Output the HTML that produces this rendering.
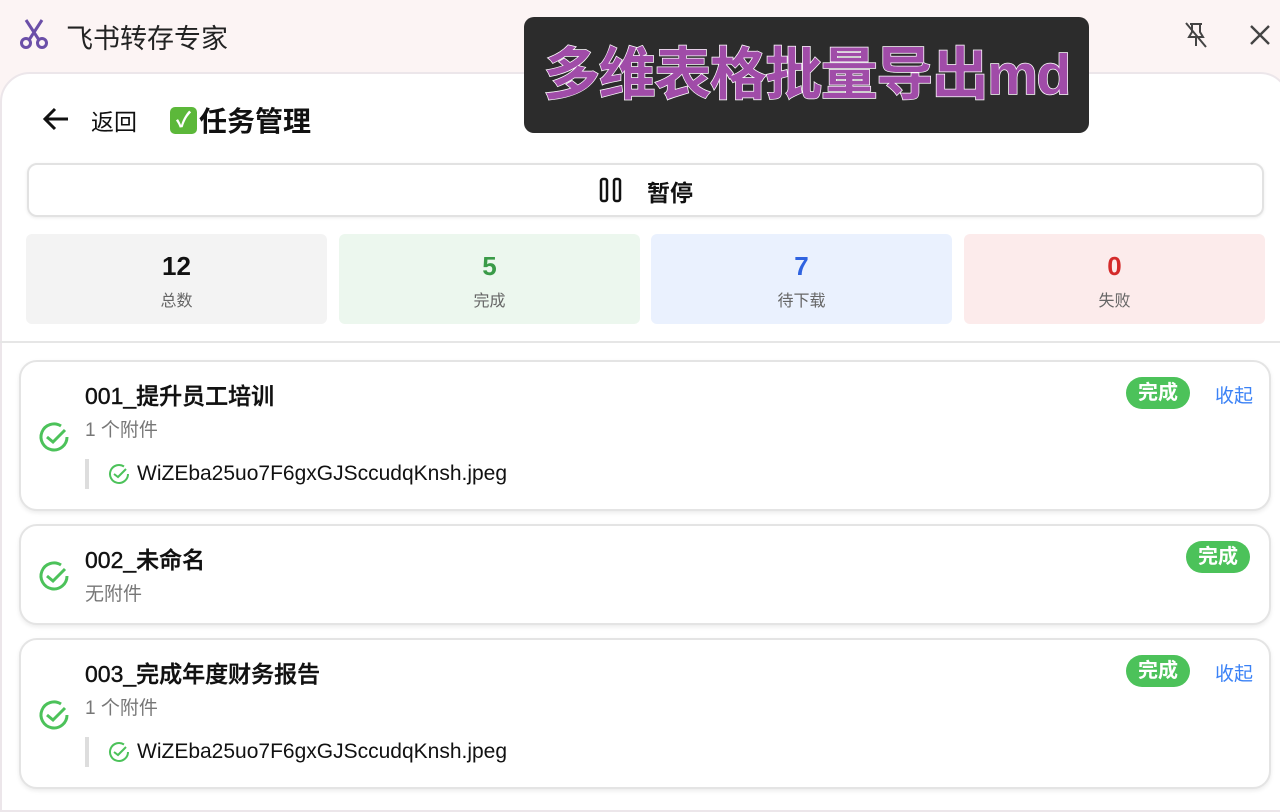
<!DOCTYPE html>
<html><head><meta charset="utf-8"><style>
*{box-sizing:border-box;margin:0;padding:0}
body{width:1280px;height:800px;overflow:hidden;background:#fcf4f4;font-family:"Liberation Sans","Noto Sans CJK SC",sans-serif;color:#111;position:relative}
.title{position:absolute;left:66px;top:17px;font-size:27px;color:#222}
.panel{position:absolute;left:0;top:72px;width:1290px;height:740px;background:#fff;border:2px solid #ece6ea;border-radius:30px 30px 0 0}
.abs{position:absolute}
.stat{position:absolute;top:234px;width:301px;height:90px;border-radius:6px;text-align:center}
.stat b{display:block;font-size:26px;margin-top:17px;line-height:30px}
.stat span{display:block;font-size:16px;color:#666;margin-top:6px}
.card{position:absolute;left:19px;width:1252px;background:#fff;border:2px solid #e4e4e4;border-radius:18px;box-shadow:0 2px 4px rgba(0,0,0,.08)}
.name{position:absolute;left:64px;font-size:23px;font-weight:500;color:#111;-webkit-text-stroke:0.4px #111}
.sub{position:absolute;left:64px;font-size:19px;color:#777}
.badge{position:absolute;background:#4cc25a;color:#fff;font-weight:bold;font-size:20px;border-radius:16px;padding:2px 12px;line-height:28px}
.fold{position:absolute;color:#3b82f6;font-size:19px}
.att{position:absolute;left:64px;border-left:4px solid #ddd;height:30px;padding-left:18px;font-size:21px;line-height:30px;display:flex;align-items:center;gap:6px}
</style></head><body>
<svg class="abs" style="left:19px;top:18px" width="30" height="32" viewBox="0 0 30 32" fill="none" stroke="#6b4fa8" stroke-width="3"><path d="M7 2 L20 22 M23 2 L10 22"/><circle cx="7" cy="25" r="4.5"/><circle cx="23" cy="25" r="4.5"/></svg>
<div class="title">飞书转存专家</div>
<svg class="abs" style="left:1183px;top:21px" width="26" height="28" viewBox="0 0 26 28" fill="none" stroke="#444" stroke-width="2"><path d="M7 3h12M9 3v8l-3 5h14l-3-5V3M13 16v9M3 2l20 24"/></svg>
<svg class="abs" style="left:1249px;top:24px" width="22" height="22" viewBox="0 0 22 22" stroke="#444" stroke-width="2.4"><path d="M2 2l18 18M20 2L2 20"/></svg>
<div class="panel"></div>
<svg class="abs" style="left:42px;top:106px" width="28" height="26" viewBox="0 0 28 26" fill="none" stroke="#111" stroke-width="3"><path d="M26 13H4M13 3L3 13l10 10"/></svg>
<div class="abs" style="left:91px;top:103px;font-size:23px">返回</div>
<div class="abs" style="left:170px;top:100px;font-size:28px;font-weight:bold;display:flex;align-items:center"><span style="display:inline-block;width:27px;height:27px;background:#5cb83a;border-radius:5px;color:#fff;font-size:21px;text-align:center;line-height:27px;margin-right:2px">✓</span>任务管理</div>
<div class="abs" style="left:27px;top:163px;width:1237px;height:54px;border:2px solid #e2e2e2;border-radius:10px;box-shadow:0 1px 3px rgba(0,0,0,.08)"></div>
<svg class="abs" style="left:599px;top:177px" width="24" height="26" viewBox="0 0 24 26" fill="none" stroke="#111" stroke-width="2.5"><rect x="2" y="2" width="6" height="22" rx="2"/><rect x="15" y="2" width="6" height="22" rx="2"/></svg>
<div class="abs" style="left:647px;top:174px;font-size:23px;font-weight:bold">暂停</div>
<div class="stat" style="left:26px;background:#f3f3f3"><b style="color:#111">12</b><span>总数</span></div>
<div class="stat" style="left:339px;background:#ecf7ee"><b style="color:#3a9b48">5</b><span>完成</span></div>
<div class="stat" style="left:651px;background:#eaf1fe"><b style="color:#2f63e0">7</b><span>待下载</span></div>
<div class="stat" style="left:964px;background:#fcebeb"><b style="color:#d42a2a">0</b><span>失败</span></div>
<div class="abs" style="left:0;top:341px;width:1280px;height:2px;background:#e6e6e6"></div>

<div class="card" style="top:360px;height:151px">
<svg class="abs" style="left:16px;top:58px" width="34" height="34" viewBox="0 0 34 34" fill="none" stroke="#4cc25a" stroke-width="3"><path d="M30 17A13 13 0 1 1 24 6"/><path d="M10 17l6 5 12-12"/></svg>
<div class="name" style="top:15px">001_提升员工培训</div>
<div class="sub" style="top:53px">1 个附件</div>
<div class="att" style="top:97px"><svg width="24" height="24" viewBox="0 0 24 24" fill="none" stroke="#4cc25a" stroke-width="2"><path d="M21 12A9 9 0 1 1 17 4.5"/><path d="M7 12l4 3 8-8"/></svg>WiZEba25uo7F6gxGJSccudqKnsh.jpeg</div>
<div class="badge" style="left:1105px;top:15px">完成</div>
<div class="fold" style="left:1194px;top:19px">收起</div>
</div>

<div class="card" style="top:524px;height:101px">
<svg class="abs" style="left:16px;top:33px" width="34" height="34" viewBox="0 0 34 34" fill="none" stroke="#4cc25a" stroke-width="3"><path d="M30 17A13 13 0 1 1 24 6"/><path d="M10 17l6 5 12-12"/></svg>
<div class="name" style="top:15px">002_未命名</div>
<div class="sub" style="top:53px">无附件</div>
<div class="badge" style="left:1165px;top:15px">完成</div>
</div>

<div class="card" style="top:638px;height:151px">
<svg class="abs" style="left:16px;top:58px" width="34" height="34" viewBox="0 0 34 34" fill="none" stroke="#4cc25a" stroke-width="3"><path d="M30 17A13 13 0 1 1 24 6"/><path d="M10 17l6 5 12-12"/></svg>
<div class="name" style="top:15px">003_完成年度财务报告</div>
<div class="sub" style="top:53px">1 个附件</div>
<div class="att" style="top:97px"><svg width="24" height="24" viewBox="0 0 24 24" fill="none" stroke="#4cc25a" stroke-width="2"><path d="M21 12A9 9 0 1 1 17 4.5"/><path d="M7 12l4 3 8-8"/></svg>WiZEba25uo7F6gxGJSccudqKnsh.jpeg</div>
<div class="badge" style="left:1105px;top:15px">完成</div>
<div class="fold" style="left:1194px;top:19px">收起</div>
</div>

<div class="abs" style="left:524px;top:17px;width:565px;height:116px;background:#2c2c2c;border-radius:10px;text-align:center">
<div style="font-size:57px;font-weight:bold;color:#a04ca8;line-height:116px;letter-spacing:-1.5px;-webkit-text-stroke:1.5px #fff;paint-order:stroke fill;white-space:nowrap">多维表格批量导出md</div>
</div>
</body></html>
